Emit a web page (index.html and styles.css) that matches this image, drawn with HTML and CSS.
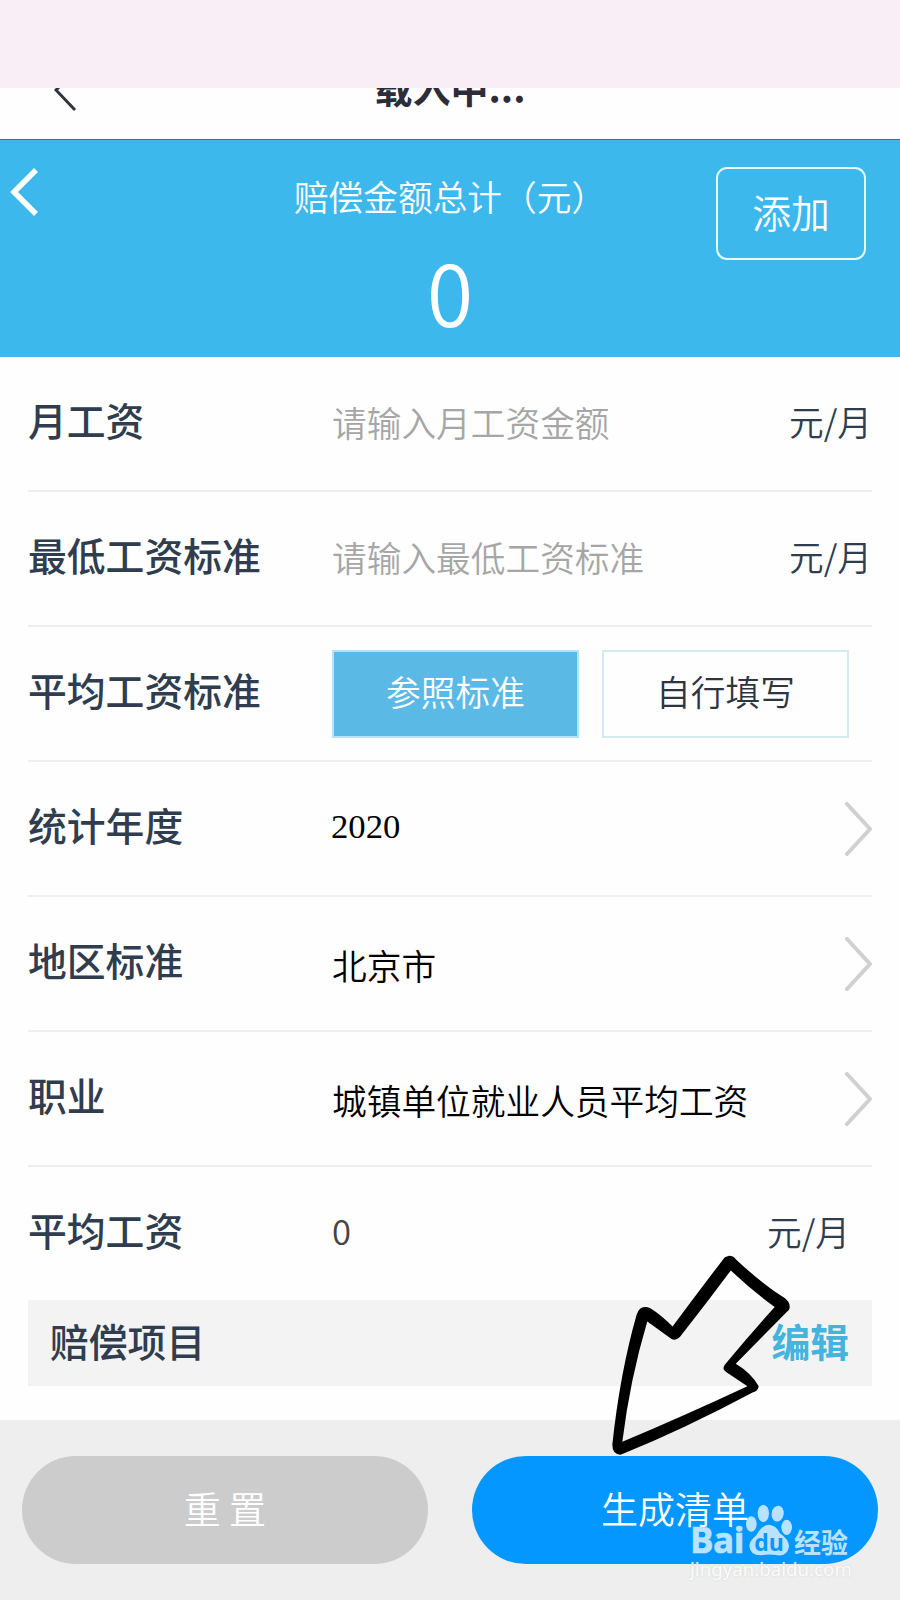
FILE: index.html
```html
<!DOCTYPE html>
<html lang="zh-CN">
<head>
  <meta charset="UTF-8">
  <meta name="viewport" content="width=device-width, initial-scale=1.0">
  <title>赔偿金额计算</title>
  <link rel="stylesheet" href="styles.css">
</head>
<body>

  <div class="status-bar"></div>

  <div class="nav-bar">
    <svg class="nav-back" width="24" height="44" viewBox="0 0 24 44"><path d="M22 1 L2 21 L21 41" /></svg>
    <span class="nav-title">载入中...</span>
  </div>

  <header class="total">
    <svg class="back" width="32" height="54" viewBox="0 0 32 54"><path d="M28 5 L6 27 L28 49" /></svg>
    <div class="total-info">
      <div class="total-label">赔偿金额总计（元）</div>
      <div class="total-amount">0</div>
    </div>
    <button class="add-btn">添加</button>
  </header>

  <main class="form">
    <div class="row">
      <label class="label" for="salary">月工资</label>
      <input class="field" type="text" id="salary" placeholder="请输入月工资金额">
      <span class="unit">元/月</span>
    </div>
    <div class="row">
      <label class="label" for="minSalary">最低工资标准</label>
      <input class="field" type="text" id="minSalary" placeholder="请输入最低工资标准">
      <span class="unit">元/月</span>
    </div>
    <div class="row">
      <span class="label">平均工资标准</span>
      <div class="switch">
        <button class="option active">参照标准</button>
        <button class="option">自行填写</button>
      </div>
    </div>
    <div class="row">
      <span class="label">统计年度</span>
      <span class="value year">2020</span>
      <svg class="arrow" width="28" height="54" viewBox="0 0 28 54"><path d="M3 2 L26 27 L3 52" /></svg>
    </div>
    <div class="row">
      <span class="label">地区标准</span>
      <span class="value">北京市</span>
      <svg class="arrow" width="28" height="54" viewBox="0 0 28 54"><path d="M3 2 L26 27 L3 52" /></svg>
    </div>
    <div class="row">
      <span class="label">职业</span>
      <span class="value">城镇单位就业人员平均工资</span>
      <svg class="arrow" width="28" height="54" viewBox="0 0 28 54"><path d="M3 2 L26 27 L3 52" /></svg>
    </div>
    <div class="row average">
      <span class="label">平均工资</span>
      <span class="value">0</span>
      <span class="unit">元/月</span>
    </div>

    <div class="items">
      <span>赔偿项目</span>
      <a class="edit">编辑</a>
    </div>
  </main>

  <footer class="actions">
    <button class="action reset">重 置</button>
    <button class="action submit">生成清单</button>
  </footer>

  <!-- hand-drawn pointer to the submit button -->
  <svg class="pointer" viewBox="480 160 550 615">
    <path fill-rule="evenodd" d="M838 168 Q850 168 858 178 Q940 255 1005 295 Q1026 312 1018 330 L858 492 Q905 520 927 560 Q925 575 910 578 Q700 690 512 766 Q487 765 487 735 Q510 520 560 345 Q568 318 590 322 Q610 325 668 380 Q750 270 825 172 Z
      M843 212 Q770 310 690 412 Q678 424 665 418 L592 365 Q540 540 517 727 Q700 650 893 560 L830 518 Q815 510 825 495 Q900 405 975 322 Q910 275 843 212 Z" />
  </svg>

  <div class="watermark">
    <div class="brand">
      <span class="brand-bai">Bai</span>
      <span class="paw">
        <svg width="46" height="52" viewBox="257 71 138 156">
          <ellipse cx="273" cy="131" rx="16" ry="23" />
          <ellipse cx="309" cy="99" rx="17" ry="26" />
          <ellipse cx="352" cy="100" rx="18" ry="24" transform="rotate(10 352 100)" />
          <ellipse cx="379" cy="141" rx="16" ry="23" />
          <path d="M326 133 Q347 134 358 158 Q387 178 386 200 Q380 228 352 225 Q326 220 302 225 Q270 226 267 197 Q268 181 288 165 Q304 134 326 133 Z" />
        </svg>
        <span class="brand-du">du</span>
      </span>
      <span class="brand-cn">经验</span>
    </div>
    <div class="site">jingyan.baidu.com</div>
  </div>

</body>
</html>
```

FILE: styles.css
```css
* {
  box-sizing: border-box;
}

body {
  position: relative;
  width: 900px;
  height: 1600px;
  margin: 0;
  overflow: hidden;
  display: flex;
  flex-direction: column;
  background: #fefefe;
  color: #2f3d4e;
  font-family: "Noto Sans CJK SC", sans-serif;
  font-size: 34.7px;
  font-weight: 350;
}

button, input {
  font-family: inherit;
  font-size: inherit;
  font-weight: inherit;
  padding: 0;
  margin: 0;
  border: none;
  background: none;
}

svg path {
  fill: none;
}

.status-bar {
  height: 88px;
  background: #f9edf6;
}

/* page scrolled up, so the title is cut by the status bar */
.nav-bar {
  position: relative;
  height: 52px;
  overflow: hidden;
  display: flex;
  justify-content: center;
  align-items: flex-start;
  border-bottom: 1px solid #456f82;
}

.nav-back {
  position: absolute;
  left: 54px;
  top: -19px;
}

.nav-back path {
  stroke: #333340;
  stroke-width: 3;
}

.nav-title {
  margin-top: -26px;
  line-height: 50px;
  font-size: 38px;
  font-weight: bold;
  color: #2c2c3a;
}

.total {
  position: relative;
  height: 217px;
  display: flex;
  justify-content: center;
  background: #3cb8ed;
  color: #fff;
}

.back {
  position: absolute;
  left: 8px;
  top: 25px;
}

.back path {
  stroke: #fff;
  stroke-width: 5.5;
}

.total-info {
  text-align: center;
}

.total-label {
  margin-top: 31px;
  line-height: 50px;
}

.total-amount {
  margin-top: 25px;
  line-height: 90px;
  font-size: 84px;
}

.add-btn {
  position: absolute;
  right: 34px;
  top: 27px;
  width: 150px;
  height: 93px;
  padding-bottom: 5px;
  border: 2px solid #e6fbff;
  border-radius: 11px;
  color: #fff;
  font-size: 38.8px;
}

.form {
  height: 1063px;
  padding: 0 28px;
}

.row {
  height: 135px;
  display: flex;
  align-items: center;
  border-bottom: 2px solid #eee;
}

.label {
  width: 304px;
  padding-bottom: 10px;
  font-size: 38.8px;
  font-weight: 500;
}

.field {
  flex: 1;
  min-width: 0;
  height: 60px;
  padding-bottom: 4px;
}

.field::placeholder {
  color: #a6a6a6;
  opacity: 1;
}

.unit {
  padding-bottom: 5px;
}

.value {
  flex: 1;
  padding-top: 3px;
  color: #000;
}

.year {
  padding: 0 0 3px;
  margin-left: -1px;
  font-family: "Liberation Serif", serif;
}

.arrow path {
  stroke: #d0d0d0;
  stroke-width: 4;
  stroke-linecap: round;
}

.switch {
  display: flex;
  gap: 23px;
}

.option {
  width: 247px;
  height: 88px;
  border: 2px solid #d5e9f1;
  padding-bottom: 5px;
  color: #2f3540;
}

.option.active {
  background: #5bb9e6;
  border-color: #b5e3f5;
  color: #fff;
}

.average {
  height: 133px;
  padding-right: 22px;
  border-bottom: none;
}

.average .value {
  padding: 0 0 7px;
  color: #444;
}

.items {
  height: 86px;
  padding: 0 23px 7px 22px;
  display: flex;
  justify-content: space-between;
  align-items: center;
  background: #f3f3f3;
  font-size: 38.8px;
  font-weight: 500;
}

.edit {
  color: #45b3dc;
  font-weight: bold;
}

.actions {
  flex: 1;
  display: flex;
  gap: 44px;
  padding: 36px 22px 0;
  background: #eee;
}

.action {
  flex: 1;
  height: 108px;
  border-radius: 54px;
  padding-bottom: 5px;
  color: #fff;
  font-size: 37px;
}

.reset {
  background: #ccc;
}

.submit {
  background: #0397ff;
}

.pointer {
  position: absolute;
  left: 610px;
  top: 1253px;
  width: 183px;
  height: 205px;
}

.pointer path {
  fill: #000;
}

.watermark {
  position: absolute;
  left: 690px;
  top: 1504px;
  width: 165px;
  color: #fff;
}

.brand {
  display: flex;
  align-items: flex-end;
  height: 52px;
  opacity: 0.72;
}

.brand-bai {
  width: 56px;
  font: bold 35px/32px "Open Sans", sans-serif;
  letter-spacing: -0.5px;
  -webkit-text-stroke: 0.6px #fff;
}

.paw {
  position: relative;
  width: 46px;
  height: 52px;
}

.paw path, .paw ellipse {
  fill: #fff;
}

.brand-du {
  position: absolute;
  left: 0;
  right: 0;
  bottom: 2px;
  text-align: center;
  font: bold 23px/24px "Open Sans", sans-serif;
  color: #0397ff;
}

.brand-cn {
  margin-left: 2px;
  line-height: 29px;
  font-size: 27px;
  font-weight: bold;
}

.site {
  margin-top: 1px;
  font: 18.7px/24px "Noto Sans", sans-serif;
  opacity: 0.85;
  text-shadow: 0 0 2px #ccc;
}
```
